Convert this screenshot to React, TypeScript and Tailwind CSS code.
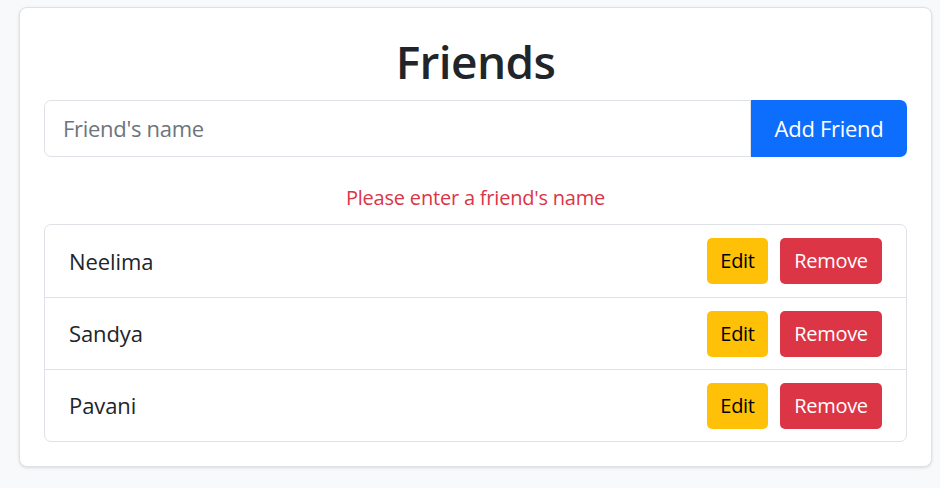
import { useState } from "react";

const initialFriends = ["Neelima", "Sandya", "Pavani"];

export default function App() {
  const [friends] = useState(initialFriends);
  const [name, setName] = useState("");

  return (
    <div
      className="min-h-[488px] bg-[#f8f9fa] pl-[19px] pr-[8px] pt-[7px] text-[#212529]"
      style={{ fontFamily: '"Open Sans", "Noto Sans", sans-serif' }}
    >
      <div className="w-[913px] rounded-[8px] border border-[#dee2e6] bg-white px-[24px] pb-[24px] pt-[30px] shadow-[0_1px_3px_rgba(0,0,0,0.12)]">
        <h1 className="text-center text-[46px] font-semibold leading-none tracking-[-0.6px]">
          Friends
        </h1>

        <div className="mt-[16px] flex h-[57px]">
          <input
            value={name}
            onChange={(e) => setName(e.target.value)}
            placeholder="Friend's name"
            className="min-w-0 flex-1 rounded-l-[7px] border border-[#dee2e6] bg-white px-[18px] text-[22px] tracking-[-0.3px] outline-none placeholder:text-[#6c757d]"
          />
          <button className="w-[156px] rounded-r-[7px] bg-[#0d6efd] text-[22px] tracking-[-0.3px] text-white">
            Add Friend
          </button>
        </div>

        <p className="mt-[27px] text-center text-[20px] leading-[27px] tracking-[-0.2px] text-[#dc3545]">
          Please enter a friend's name
        </p>

        <ul className="mt-[13px] rounded-[7px] border border-[#dee2e6]">
          {friends.map((f, i) => (
            <li
              key={f}
              className={
                "flex h-[72px] items-center justify-between pl-[24px] pr-[24px]" +
                (i > 0 ? " border-t border-[#dee2e6]" : "")
              }
            >
              <span className="text-[22px] tracking-[-0.1px]">{f}</span>
              <div className="flex gap-[12px]">
                <button className="h-[46px] w-[61px] rounded-[5px] bg-[#ffc107] text-[20px] tracking-[-0.3px] text-black">
                  Edit
                </button>
                <button className="h-[46px] w-[102px] rounded-[5px] bg-[#dc3545] text-[20px] tracking-[-0.3px] text-white">
                  Remove
                </button>
              </div>
            </li>
          ))}
        </ul>
      </div>
    </div>
  );
}
